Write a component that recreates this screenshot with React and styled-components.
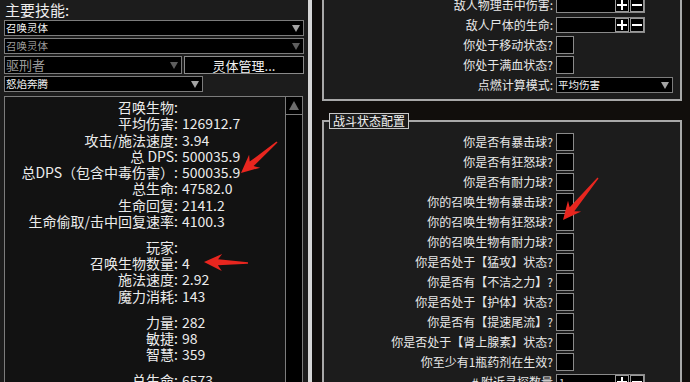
import styled, { createGlobalStyle } from "styled-components"

const GlobalStyle = createGlobalStyle`
    html, body {
        margin: 0;
        padding: 0;
        background: #110e0c;
    }
    body {
        font-family: "Noto Sans CJK SC", "Noto Sans", sans-serif;
    }
    * { box-sizing: border-box; }
`

const Screen = styled.div`
    position: relative;
    width: 690px;
    height: 382px;
    display: flex;
    overflow: hidden;
    color: #e6e6e6;
`

const LeftPanel = styled.div`
    width: 308px;
    flex: none;
    background: #1c1c1c;
    padding-left: 4px;
    display: flex;
    flex-direction: column;
    overflow: hidden;
`

const Heading = styled.div`
    height: 21px;
    font-size: 15px;
    line-height: 20px;
    padding-left: 1px;
    color: #eeeeee;
`

const SelectStack = styled.div`
    display: flex;
    flex-direction: column;
    gap: 2px;
`

const SelectRow = styled.div`
    display: flex;
    gap: 2px;
`

const Select = styled.div`
    width: ${p => p.$w}px;
    height: ${p => p.$h || 16}px;
    flex: none;
    background: #000;
    border: 1px solid #7c7c7c;
    display: flex;
    align-items: center;
    justify-content: space-between;
    padding: 0 3px 0 1px;
    font-size: ${p => p.$big ? 13 : 10.5}px;
    line-height: 14px;
    color: ${p => p.$disabled ? "#9a9a9a" : "#f2f2f2"};
    white-space: nowrap;
`

const Button = styled.div`
    width: 120px;
    height: 18px;
    background: #000;
    border: 1px solid #8a8a8a;
    display: flex;
    align-items: center;
    justify-content: center;
    font-size: 13px;
    color: #f2f2f2;
`

const Summary = styled.div`
    width: 299px;
    height: 400px;
    flex: none;
    margin-top: 4px;
    background: #121212;
    border: 1px solid #7c7c7c;
    display: flex;
`

const SummaryBody = styled.div`
    flex: 1;
    padding-top: 2px;
`

const Section = styled.div`
    display: grid;
    grid-template-columns: 173px 1fr;
    margin-bottom: 9.5px;
    font-size: 14px;
    line-height: 16.3px;
    color: #ececec;
    white-space: nowrap;
`

const StatLabel = styled.div`
    text-align: right;
`

const StatValue = styled.div`
    padding-left: 4px;
`

const Scrollbar = styled.div`
    width: 17px;
    flex: none;
    background: #000;
    border-left: 1px solid #7c7c7c;
`

const ScrollUp = styled.div`
    height: 18px;
    border-bottom: 1px solid #7c7c7c;
    display: flex;
    align-items: center;
    justify-content: center;
`

const Splitter = styled.div`
    width: 4px;
    flex: none;
    background: #d6d6d6;
`

const RightPanel = styled.div`
    flex: 1;
    background: #110e0c;
    padding: 0 8px 0 10px;
    overflow: hidden;
`

const ScrollContent = styled.div`
    margin-top: -9px;
    display: flex;
    flex-direction: column;
    gap: 12px;
`

const Group = styled.div`
    background: #1c1c1c;
    border: 2px solid #a8a8a8;
    padding: 2px 0 4px;
`

const Fieldset = styled.fieldset`
    margin: 0;
    min-width: 0;
    background: #1c1c1c;
    border: 2px solid #a8a8a8;
    padding: 3px 0 4px;
`

const Legend = styled.legend`
    margin-left: 5px;
    padding: 0 3px;
    border: 1px solid #c8c8c8;
    font-size: 12px;
    line-height: 14px;
    color: #f2f2f2;
    background: #1c1c1c;
`

const Row = styled.div`
    display: grid;
    grid-template-columns: 229px 1fr;
    column-gap: 3px;
    align-items: center;
    height: 20px;
`

const Label = styled.div`
    text-align: right;
    font-size: 12px;
    line-height: 20px;
    color: #e8e8e8;
    white-space: nowrap;
`

const Check = styled.div`
    width: 18px;
    height: 18px;
    background: #000;
    border: 1px solid #8a8a8a;
`

const NumInput = styled.div`
    width: 89px;
    height: 16px;
    background: #000;
    border: 1px solid #8a8a8a;
    display: flex;
    align-items: center;
    padding: 0 0 0 2px;
    font-size: 10.5px;
    color: #d8d8d8;
`

const InputText = styled.span`
    flex: 1;
`

const StepButton = styled.div`
    width: 14px;
    height: 14px;
    border: 1px solid #9a9a9a;
    background: #000;
    display: flex;
    align-items: center;
    justify-content: center;
    & + & { margin-left: 1px; }
`

const Overlay = styled.svg`
    position: absolute;
    left: 0;
    top: 0;
    pointer-events: none;
`

const Arrow = ({ disabled }) => (
    <svg width="8" height="7" viewBox="0 0 8 7">
        <polygon points="0,0 8,0 4,7" fill={disabled ? "#5e5e5e" : "#a4a4a4"} />
    </svg>
)

const Plus = () => (
    <svg width="10" height="10" viewBox="0 0 10 10">
        <rect x="4" y="0" width="2" height="10" fill="#fff" />
        <rect x="0" y="4" width="10" height="2" fill="#fff" />
    </svg>
)

const Minus = () => (
    <svg width="10" height="10" viewBox="0 0 10 10">
        <rect x="0" y="4" width="10" height="2" fill="#fff" />
    </svg>
)

const Stepper = ({ value }) => (
    <NumInput>
        <InputText>{value}</InputText>
        <StepButton><Plus /></StepButton>
        <StepButton><Minus /></StepButton>
    </NumInput>
)

// red annotation arrow: tapered shaft from the tail, swept-back head at the tip
const arrowPoints = (tx, ty, px, py) => {
    const len = Math.hypot(px - tx, py - ty)
    const dx = (px - tx) / len
    const dy = (py - ty) / len
    const nx = -dy
    const ny = dx
    const at = (s, w) => [px - dx * s + nx * w, py - dy * s + ny * w]
    const pts = [
        [px, py],
        at(18, 8.5),
        at(14, 3),
        [tx + nx * 0.7, ty + ny * 0.7],
        [tx - nx * 0.7, ty - ny * 0.7],
        at(14, -3),
        at(18, -8.5),
    ]
    return pts.map(p => p.map(v => v.toFixed(1)).join(",")).join(" ")
}

const sections = [
    [
        ["召唤生物:", ""],
        ["平均伤害:", "126912.7"],
        ["攻击/施法速度:", "3.94"],
        ["总 DPS:", "500035.9"],
        ["总DPS（包含中毒伤害）:", "500035.9"],
        ["总生命:", "47582.0"],
        ["生命回复:", "2141.2"],
        ["生命偷取/击中回复速率:", "4100.3"],
    ],
    [
        ["玩家:", ""],
        ["召唤生物数量:", "4"],
        ["施法速度:", "2.92"],
        ["魔力消耗:", "143"],
    ],
    [
        ["力量:", "282"],
        ["敏捷:", "98"],
        ["智慧:", "359"],
    ],
    [
        ["总生命:", "6573"],
    ],
]

const combatChecks = [
    "你是否有暴击球?",
    "你是否有狂怒球?",
    "你是否有耐力球?",
    "你的召唤生物有暴击球?",
    "你的召唤生物有狂怒球?",
    "你的召唤生物有耐力球?",
    "你是否处于【猛攻】状态?",
    "你是否有【不洁之力】?",
    "你是否处于【护体】状态?",
    "你是否有【提速尾流】?",
    "你是否处于【肾上腺素】状态?",
    "你至少有1瓶药剂在生效?",
]

const arrows = [
    [277, 142, 241, 173],
    [248, 263, 204, 262],
    [598, 178, 563, 220],
]

const App = () => {
    return <Screen>
        <GlobalStyle />
        <LeftPanel>
            <Heading>主要技能:</Heading>
            <SelectStack>
                <Select $w={300}>召唤灵体<Arrow /></Select>
                <Select $w={300} $disabled>召唤灵体<Arrow disabled /></Select>
                <SelectRow>
                    <Select $w={178} $h={18} $big $disabled>驱刑者<Arrow disabled /></Select>
                    <Button>灵体管理...</Button>
                </SelectRow>
                <Select $w={199}>怒焰奔腾<Arrow /></Select>
            </SelectStack>
            <Summary>
                <SummaryBody>
                    {sections.map((rows, i) => (
                        <Section key={i}>
                            {rows.map(([label, value], j) => [
                                <StatLabel key={"l" + j}>{label}</StatLabel>,
                                <StatValue key={"v" + j}>{value}</StatValue>,
                            ])}
                        </Section>
                    ))}
                </SummaryBody>
                <Scrollbar>
                    <ScrollUp>
                        <svg width="10" height="9" viewBox="0 0 10 9">
                            <polygon points="5,0 10,9 0,9" fill="#6c6c6c" />
                        </svg>
                    </ScrollUp>
                </Scrollbar>
            </Summary>
        </LeftPanel>
        <Splitter />
        <RightPanel>
            <ScrollContent>
                <Group>
                    <Row><Label>敌人物理击中伤害:</Label><Stepper value="" /></Row>
                    <Row><Label>敌人尸体的生命:</Label><Stepper value="" /></Row>
                    <Row><Label>你处于移动状态?</Label><Check /></Row>
                    <Row><Label>你处于满血状态?</Label><Check /></Row>
                    <Row>
                        <Label>点燃计算模式:</Label>
                        <Select $w={117}>平均伤害<Arrow /></Select>
                    </Row>
                </Group>
                <Fieldset>
                    <Legend>战斗状态配置</Legend>
                    {combatChecks.map(text => (
                        <Row key={text}><Label>{text}</Label><Check /></Row>
                    ))}
                    <Row><Label># 附近寻探数量</Label><Stepper value="1" /></Row>
                </Fieldset>
            </ScrollContent>
        </RightPanel>
        <Overlay width="690" height="382">
            {arrows.map((a, i) => (
                <polygon key={i} points={arrowPoints(...a)} fill="#e8261f" />
            ))}
        </Overlay>
    </Screen>
}

export default App
